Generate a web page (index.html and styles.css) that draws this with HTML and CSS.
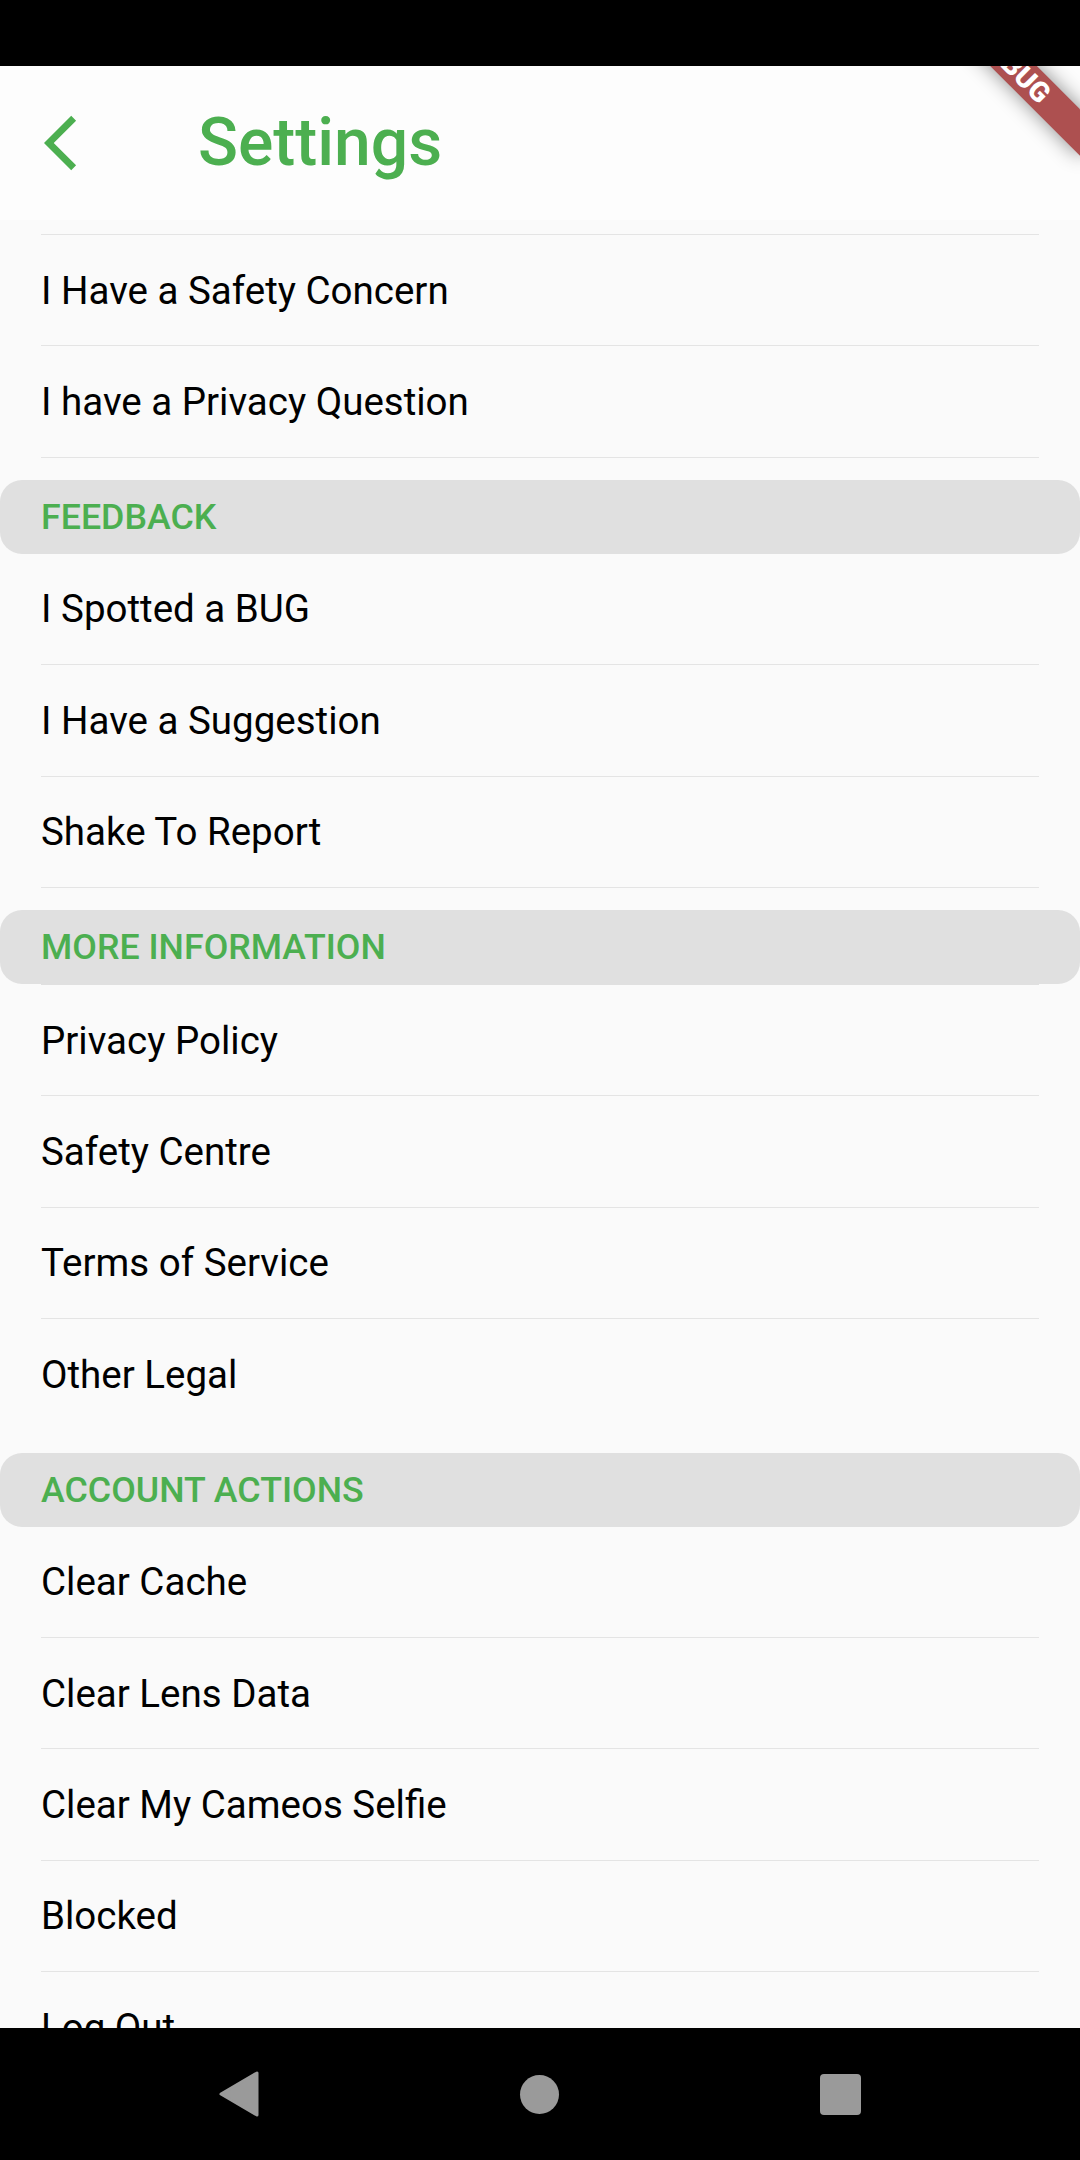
FILE: index.html
```html
<!DOCTYPE html>
<html lang="en">
<head>
<meta charset="utf-8">
<title>Settings</title>
<link rel="stylesheet" href="styles.css">
</head>
<body>
<div class="screen">
  <div class="status"></div>
  <div class="app">
    <header class="appbar">
      <div class="leading">
        <svg class="back-icon" viewBox="0 0 24 24" width="66" height="66" aria-hidden="true">
          <path d="M11.67 3.87L9.9 2.1 0 12l9.9 9.9 1.77-1.77L3.54 12z" fill="#4caf50"/>
        </svg>
      </div>
      <h1 class="title">Settings</h1>
    </header>
    <div class="list">
      <div class="row cut"></div>
      <div class="row">I Have a Safety Concern</div>
      <div class="row">I have a Privacy Question</div>

      <div class="section-head">FEEDBACK</div>
      <div class="row">I Spotted a BUG</div>
      <div class="row">I Have a Suggestion</div>
      <div class="row">Shake To Report</div>

      <div class="section-head">MORE INFORMATION</div>
      <div class="head-divider"></div>
      <div class="row">Privacy Policy</div>
      <div class="row">Safety Centre</div>
      <div class="row">Terms of Service</div>
      <div class="row last">Other Legal</div>

      <div class="section-head">ACCOUNT ACTIONS</div>
      <div class="row">Clear Cache</div>
      <div class="row">Clear Lens Data</div>
      <div class="row">Clear My Cameos Selfie</div>
      <div class="row">Blocked</div>
      <div class="row">Log Out</div>
    </div>
    <div class="debug-banner">DEBUG</div>
  </div>
  <nav class="navbar">
    <svg class="nav-back" viewBox="0 0 40 46" width="40" height="46" aria-hidden="true">
      <path d="M38 2 L38 44 L2 23 Z" fill="#9a9a9a" stroke="#9a9a9a" stroke-width="3" stroke-linejoin="round"/>
    </svg>
    <span class="nav-home"></span>
    <span class="nav-recent"></span>
  </nav>
</div>
</body>
</html>
```

FILE: styles.css
```css
html, body {
  margin: 0;
  padding: 0;
  background: #000;
}

.screen {
  width: 1080px;
  height: 2160px;
  display: flex;
  flex-direction: column;
  overflow: hidden;
  font-family: Roboto, "Noto Sans", "Liberation Sans", sans-serif;
}

.status {
  height: 66px;
  flex: none;
  background: #000;
}

.app {
  position: relative;
  height: 1962px;
  flex: none;
  display: flex;
  flex-direction: column;
  background: #fafafa;
  overflow: hidden;
}

.appbar {
  height: 154px;
  flex: none;
  display: flex;
  align-items: center;
  background: #fdfdfd;
}

.leading {
  width: 154px;
  height: 154px;
  display: flex;
  align-items: center;
  justify-content: center;
}

.back-icon {
  display: block;
}

.title {
  margin: 0 0 0 44px;
  font-size: 66px;
  font-weight: 500;
  color: #4caf50;
  line-height: 1;
}

.list {
  flex: 1;
  overflow: hidden;
  display: flex;
  flex-direction: column;
}

.row {
  flex: none;
  box-sizing: border-box;
  height: 111.4px;
  margin: 0 41px;
  border-bottom: 1px solid #e4e4e4;
  display: flex;
  align-items: center;
  font-size: 38.5px;
  color: #000;
  white-space: nowrap;
}

.row.cut {
  height: 15px;
}

.row.last {
  border-bottom-color: transparent;
}

.section-head {
  flex: none;
  margin-top: 22px;
  height: 74px;
  border-radius: 22px;
  background: #e0e0e0;
  padding-left: 41px;
  display: flex;
  align-items: center;
  font-size: 35.75px;
  font-weight: 500;
  color: #4caf50;
}

.head-divider {
  flex: none;
  height: 1px;
  margin: 0 41px;
  background: #e0e0e0;
}

.debug-banner {
  position: absolute;
  left: 904px;
  top: -16.5px;
  width: 220px;
  height: 33px;
  transform: rotate(45deg);
  background: #ad5050;
  box-shadow: 0 0 20px rgba(0, 0, 0, 0.45);
  color: #fff;
  font-size: 28px;
  font-weight: 900;
  line-height: 33px;
  text-align: center;
}

.navbar {
  height: 132px;
  flex: none;
  background: #000;
  display: flex;
  align-items: center;
  padding-left: 219px;
  gap: 261px;
}

.nav-back {
  display: block;
}

.nav-home {
  display: block;
  width: 39px;
  height: 39px;
  border-radius: 50%;
  background: #9a9a9a;
}

.nav-recent {
  display: block;
  width: 41px;
  height: 41px;
  border-radius: 4px;
  background: #9a9a9a;
}
```
